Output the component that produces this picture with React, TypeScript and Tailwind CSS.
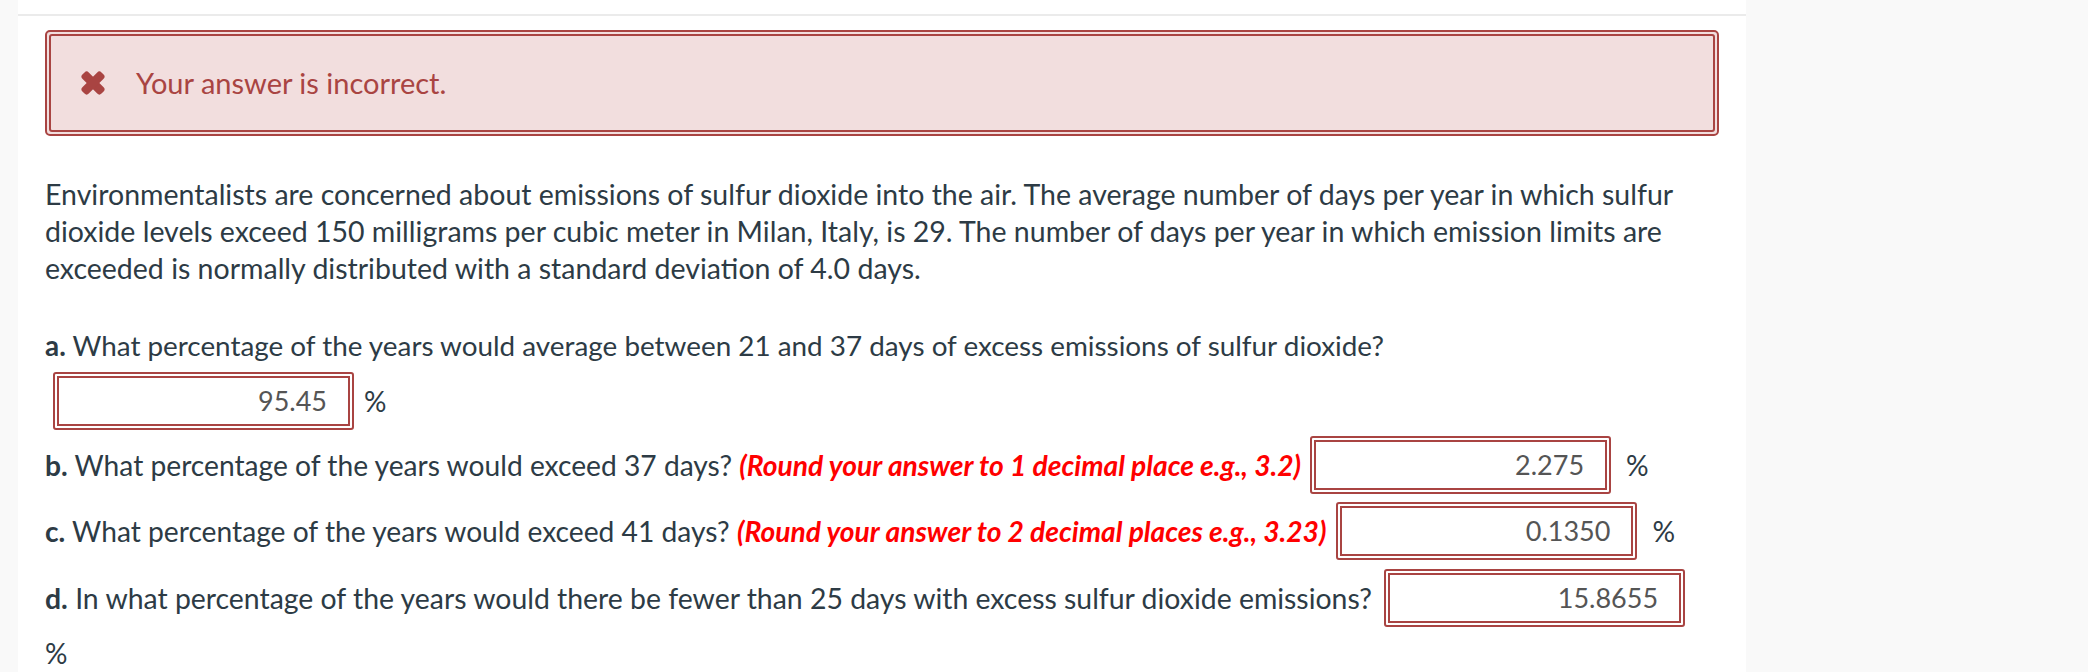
import React from "react";

function XIcon() {
  return (
    <svg width="26" height="26" viewBox="0 0 26 26" className="shrink-0">
      <g fill="#a94442">
        <rect x="-0.5" y="8.5" width="27" height="9" rx="3" transform="rotate(45 13 13)" />
        <rect x="-0.5" y="8.5" width="27" height="9" rx="3" transform="rotate(-45 13 13)" />
      </g>
    </svg>
  );
}

function AnswerBox({ value, className = "" }: { value: string; className?: string }) {
  return (
    <div className={"shrink-0 w-[301px] h-[58px] border-2 border-[#a94442] p-[2px] rounded-[3px] bg-white " + className}>
      <div className="h-full w-full border-2 border-[#a94442] flex items-center justify-end pr-[21px] text-[#555] text-[27px]">
        {value}
      </div>
    </div>
  );
}

export default function App() {
  return (
    <div
      className="flex w-[2088px] h-[672px] overflow-hidden bg-[#f9f9f9] text-[#2d3b45]"
      style={{ fontFamily: "Lato, 'Open Sans', sans-serif" }}
    >
      <div className="w-[18px] shrink-0" />
      <div className="w-[1728px] shrink-0 bg-white pt-[14px]">
        <div className="border-t-2 border-[#ebebeb] px-[27px] pt-[14px]">
          <div className="h-[106px] border-2 border-[#a94442] p-[2px] rounded-[5px] bg-[#f2dede]">
            <div className="h-full border-2 border-[#a94442] rounded-[3px] flex items-center pl-[29px] gap-[30px] text-[#a94442] text-[29px]">
              <XIcon />
              <span>Your answer is incorrect.</span>
            </div>
          </div>

          <p className="mt-[40px] text-[28.5px] leading-[37px]">
            Environmentalists are concerned about emissions of sulfur dioxide into the air. The average number of days per year in which sulfur
            dioxide levels exceed 150 milligrams per cubic meter in Milan, Italy, is 29. The number of days per year in which emission limits are
            exceeded is normally distributed with a standard deviation of 4.0 days.
          </p>

          <p className="mt-[40px] text-[27.85px] leading-[37px]">
            <b>a.</b> What percentage of the years would average between 21 and 37 days of excess emissions of sulfur dioxide?
          </p>
          <div className="mt-[8px] flex items-center text-[28px] pl-[8px]">
            <AnswerBox value="95.45" />
            <span className="ml-[10px]">%</span>
          </div>

          <div className="mt-[6px] flex items-center text-[28.2px] whitespace-nowrap">
            <span>
              <b>b.</b> What percentage of the years would exceed 37 days?{" "}
              <b className="italic text-[#ff0000]">(Round your answer to 1 decimal place e.g., 3.2)</b>
            </span>
            <AnswerBox value="2.275" className="ml-[9px]" />
            <span className="ml-[15px]">%</span>
          </div>

          <div className="mt-[8px] flex items-center text-[28.2px] whitespace-nowrap">
            <span>
              <b>c.</b> What percentage of the years would exceed 41 days?{" "}
              <b className="italic text-[#ff0000]">(Round your answer to 2 decimal places e.g., 3.23)</b>
            </span>
            <AnswerBox value="0.1350" className="ml-[10px]" />
            <span className="ml-[15px]">%</span>
          </div>

          <div className="mt-[9px] flex items-center text-[28.4px] whitespace-nowrap">
            <span>
              <b>d.</b> In what percentage of the years would there be fewer than 25 days with excess sulfur dioxide emissions?
            </span>
            <AnswerBox value="15.8655" className="ml-[12px]" />
          </div>

          <p className="mt-[8px] text-[28px] leading-[37px]">%</p>
        </div>
      </div>
    </div>
  );
}
